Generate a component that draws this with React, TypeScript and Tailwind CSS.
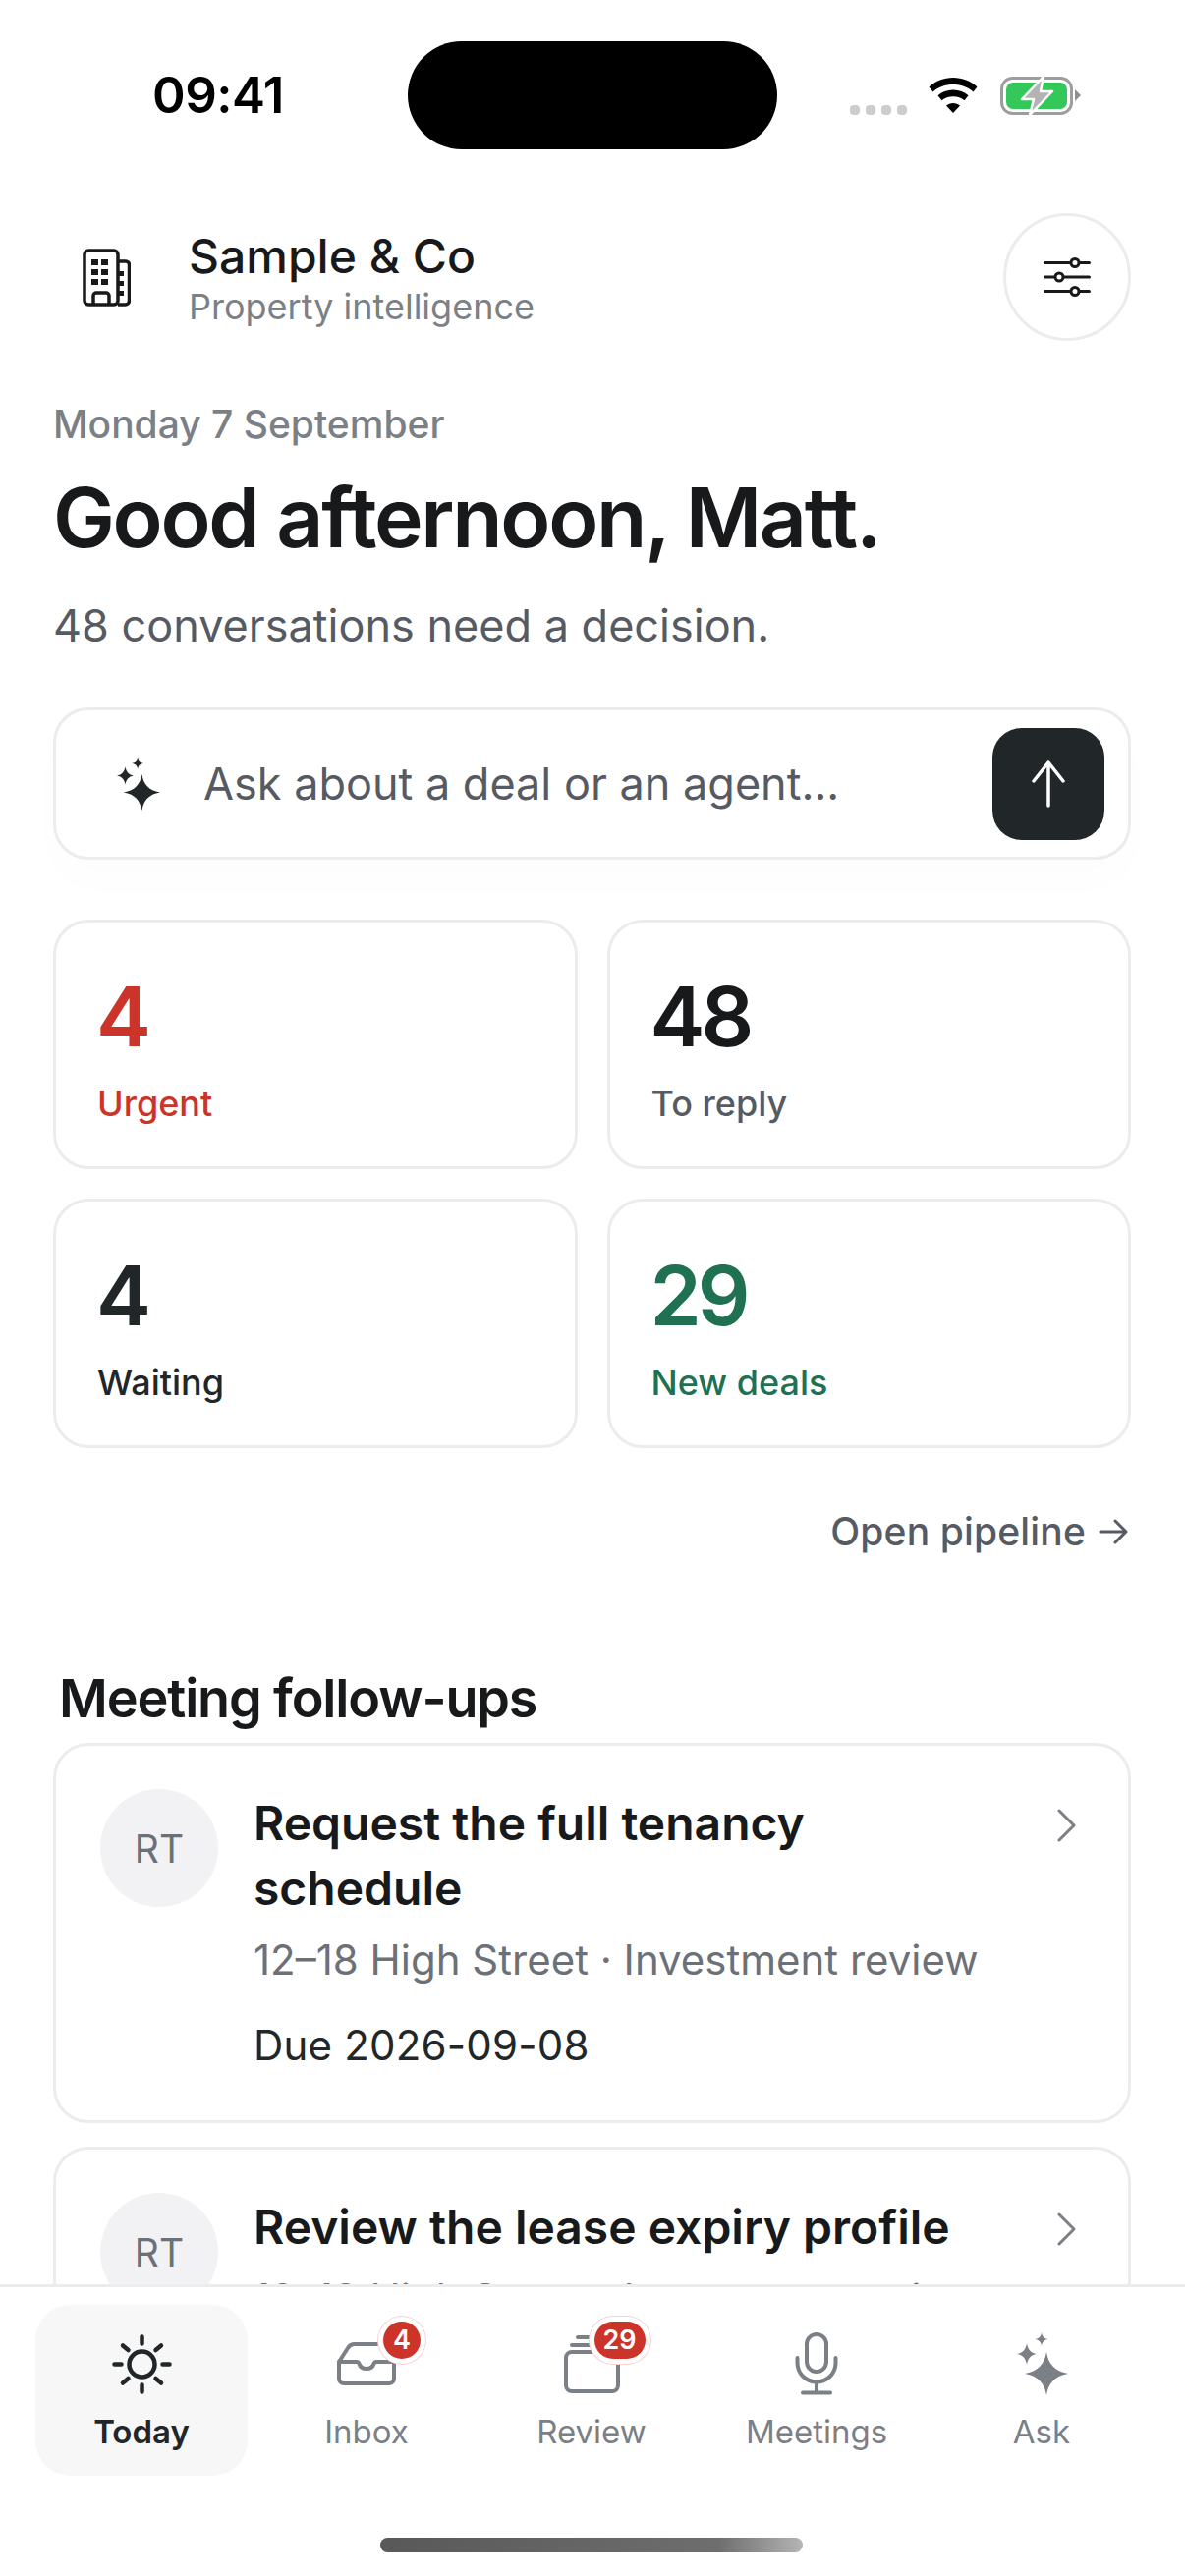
import React from 'react';

const Sparkles = ({ className }: { className?: string }) => (
  <svg viewBox="0 0 52 64" className={className} fill="currentColor">
    <path d="M30 20C32 32 38 39.500 52 42C38 44.500 32 52 30 64C28 52 22 44.500 8 42C22 39.500 28 32 30 20z" />
    <path d="M10 11C11 17.500 14 20.800 20 22C14 23.200 11 26.500 10 33C9 26.500 6 23.200 0 22C6 20.800 9 17.500 10 11z" />
    <path d="M25 0C25.600 4 27.200 6.300 32 7C27.200 7.700 25.600 10 25 14C24.400 10 22.800 7.700 18 7C22.800 6.300 24.400 4 25 0z" />
  </svg>
);

const Building = ({ className }: { className?: string }) => (
  <svg viewBox="0 0 49 59" className={className} fill="none" stroke="currentColor" strokeWidth="3.500">
    <rect x="2" y="2" width="34" height="55" rx="4" />
    <path d="M36 13h8a3.500 3.500 0 0 1 3.500 3.500V53a4 4 0 0 1-4 4H36" />
    <path d="M11 57V48a3 3 0 0 1 3-3h10a3 3 0 0 1 3 3v9" />
    <g fill="currentColor" stroke="none">
      <rect x="9" y="11" width="7" height="6" />
      <rect x="19" y="11" width="7" height="6" />
      <rect x="9" y="21" width="7" height="6" />
      <rect x="19" y="21" width="7" height="6" />
      <rect x="9" y="31" width="7" height="6" />
      <rect x="19" y="31" width="7" height="6" />
      <rect x="36" y="23" width="6" height="5" />
      <rect x="36" y="33" width="6" height="5" />
      <rect x="36" y="43" width="6" height="5" />
    </g>
  </svg>
);

const Sliders = ({ className }: { className?: string }) => (
  <svg viewBox="0 0 48 40" className={className} fill="none" stroke="currentColor" strokeWidth="3" strokeLinecap="round">
    <path d="M1.500 5.500h25M37.500 5.500h9M1.500 20h9M21.500 20h25M1.500 34.500h25M37.500 34.500h9" />
    <circle cx="32" cy="5.500" r="4" />
    <circle cx="16" cy="20" r="4" />
    <circle cx="32" cy="34.500" r="4" />
  </svg>
);

const Sun = ({ className }: { className?: string }) => (
  <svg viewBox="0 0 61 61" className={className} fill="none" stroke="currentColor" strokeWidth="4.500" strokeLinecap="round">
    <circle cx="30.500" cy="30.500" r="13" />
    <path d="M30.500 2.500v7M30.500 51.500v7M2.500 30.500h7M51.500 30.500h7M11 11.500l5.500 4.500M44.500 45l5.500 4.500M11 49.500l5.500-4.500M44.500 16l5.500-4.500" />
  </svg>
);

const Tray = ({ className }: { className?: string }) => (
  <svg viewBox="0 0 60 44" className={className} fill="none" stroke="currentColor" strokeWidth="4" strokeLinecap="round" strokeLinejoin="round">
    <path d="M2 20L11 6a8 8 0 0 1 6-4h30" />
    <path d="M2 20h18c1.500 0 2 .8 2.500 2 1 3 4 5 7.500 5s6.500-2 7.500-5c.5-1.200 1-2 2.500-2h18v17a5 5 0 0 1-5 5H7a5 5 0 0 1-5-5z" />
  </svg>
);

const Stack = ({ className }: { className?: string }) => (
  <svg viewBox="0 0 57 59" className={className} fill="none" stroke="currentColor" strokeWidth="4" strokeLinecap="round">
    <rect x="2" y="17" width="53" height="40" rx="6" />
    <path d="M14 2h24M8 10h36" />
  </svg>
);

const Mic = ({ className }: { className?: string }) => (
  <svg viewBox="0 0 44 64" className={className} fill="none" stroke="currentColor" strokeWidth="4" strokeLinecap="round">
    <rect x="12" y="2" width="20" height="38" rx="10" />
    <path d="M2.500 26v5a19.500 19.500 0 0 0 39 0v-5M22 51v10M8 61.500h28" />
  </svg>
);

const ArrowUp = ({ className }: { className?: string }) => (
  <svg viewBox="0 0 36 48" className={className} fill="none" stroke="currentColor" strokeWidth="3.500" strokeLinecap="round" strokeLinejoin="round">
    <path d="M18 2v44M3 21L18 2l15 19" />
  </svg>
);

const ArrowRight = ({ className }: { className?: string }) => (
  <svg viewBox="0 0 30 26" className={className} fill="none" stroke="currentColor" strokeWidth="3" strokeLinecap="round" strokeLinejoin="round">
    <path d="M2 13h26M17 2l11 11-11 11" />
  </svg>
);

const Chevron = ({ className }: { className?: string }) => (
  <svg viewBox="0 0 21 34" className={className} fill="none" stroke="currentColor" strokeWidth="3" strokeLinecap="round" strokeLinejoin="round">
    <path d="M3 2l15 15L3 32" />
  </svg>
);

const Wifi = () => (
  <svg viewBox="0 0 50 36" className="w-[50px] h-[36px] text-black" fill="currentColor">
    <path d="M25 0c9.500 0 18 3.400 24.500 9.500l-4 5C40 9.500 33 7 25 7S10 9.500 4.500 14.500l-4-5C7 3.400 15.500 0 25 0z" />
    <path d="M25 12.500c6 0 11.500 2.200 15.500 5.800l-4 5c-3-2.600-7-4-11.500-4s-8.500 1.400-11.500 4l-4-5c4-3.600 9.500-5.800 15.500-5.800z" />
    <path d="M25 26c2.700 0 5 1 7 2.500L25 36l-7-7.500c2-1.500 4.300-2.500 7-2.500z" />
  </svg>
);

const Battery = () => (
  <svg viewBox="0 0 82 39" className="w-[82px] h-[39px]">
    <rect x="1.500" y="1.500" width="71" height="36" rx="11" fill="none" stroke="#9d9d9d" strokeWidth="3" />
    <rect x="6" y="6" width="62" height="27" rx="7" fill="#34c759" />
    <path d="M76 13l6 6-6 6z" fill="#8e8e8e" />
    <path d="M44 0L22 23H34L30 39L53 15H41z" fill="#b3b3b3" stroke="#fff" strokeWidth="2.500" strokeLinejoin="round" />
  </svg>
);

const stats = [
  { value: '4', label: 'Urgent', num: 'text-[#cc3329]', sub: 'text-[#cc3329]' },
  { value: '48', label: 'To reply', num: 'text-[#18191b]', sub: 'text-[#565a62]' },
  { value: '4', label: 'Waiting', num: 'text-[#212629]', sub: 'text-[#212629]' },
  { value: '29', label: 'New deals', num: 'text-[#1f7152]', sub: 'text-[#1f7152]' },
];

const followUps = [
  { title: 'Request the full tenancy schedule', sub: '12–18 High Street · Investment review', due: 'Due 2026-09-08' },
  { title: 'Review the lease expiry profile', sub: '12–18 High Street · Investment review', due: 'Due 2026-09-10' },
];

const tabs = [
  { label: 'Today', icon: <Sun className="w-[61px] h-[61px]" />, active: true },
  { label: 'Inbox', icon: <Tray className="w-[60px] h-[44px]" />, badge: '4', badgePos: 'left-[47px] w-[38px]' },
  { label: 'Review', icon: <Stack className="w-[57px] h-[59px]" />, badge: '29', badgePos: 'left-[31px] w-[52px]' },
  { label: 'Meetings', icon: <Mic className="w-[44px] h-[64px]" /> },
  { label: 'Ask', icon: <Sparkles className="w-[52px] h-[64px] ml-[2px]" /> },
];

export default function App() {
  return (
    <div className="w-[1206px] h-[2622px] bg-white flex flex-col overflow-hidden font-['Inter',sans-serif]">
      <div className="flex-1 min-h-0 overflow-hidden">
        {/* status bar */}
        <div className="h-[200px] pt-[42px] pl-[155px] pr-[106px] flex items-start">
          <span className="w-[260px] h-[110px] flex items-center text-[51px] font-semibold text-black tracking-[-0.5px]">09:41</span>
          <div className="w-[376px] h-[110px] bg-black rounded-[55px]" />
          <div className="flex-1 h-[110px] flex items-center justify-end">
            <div className="flex gap-[6px] mt-[29px] mr-[22px]">
              <span className="w-[10px] h-[10px] rounded-[4px] bg-[#cdcdcd]" />
              <span className="w-[10px] h-[10px] rounded-[4px] bg-[#cdcdcd]" />
              <span className="w-[10px] h-[10px] rounded-[4px] bg-[#cdcdcd]" />
              <span className="w-[10px] h-[10px] rounded-[4px] bg-[#cdcdcd]" />
            </div>
            <Wifi />
            <div className="ml-[23px]">
              <Battery />
            </div>
          </div>
        </div>

        {/* brand row */}
        <div className="h-[130px] mt-[17px] pl-[84px] pr-[55px] flex items-center">
          <Building className="w-[49px] h-[59px] text-[#18191b]" />
          <div className="ml-[59px] flex-1 pt-[2px]">
            <div className="text-[48px] leading-[58px] font-medium text-[#18191b]">Sample &amp; Co</div>
            <div className="text-[36px] leading-[44px] text-[#7b7f86]">Property intelligence</div>
          </div>
          <button className="w-[130px] h-[130px] rounded-full border-[3px] border-[#ececee] flex items-center justify-center text-[#18191b]">
            <Sliders className="w-[48px] h-[40px]" />
          </button>
        </div>

        <div className="pl-[54px] pr-[55px]">
          <div className="mt-[58px] text-[39px] leading-[54px] font-medium text-[#7b7f86]">Monday 7 September</div>
          <h1 className="mt-[18px] text-[84px] leading-[100px] font-semibold tracking-[-2.3px] text-[#18191b]">Good afternoon, Matt.</h1>
          <p className="mt-[29px] text-[45px] leading-[62px] text-[#565a62]">48 conversations need a decision.</p>

          {/* ask box */}
          <div className="mt-[52px] h-[155px] rounded-[36px] border-[3px] border-[#ececee] flex items-center pl-[62px] pr-[24px] shadow-[0_24px_48px_rgba(0,0,0,0.012)]">
            <Sparkles className="w-[44px] h-[54px] text-[#212629]" />
            <span className="ml-[44px] flex-1 text-[45px] text-[#565a62]">Ask about a deal or an agent...</span>
            <button className="w-[114px] h-[114px] rounded-[30px] bg-[#212629] flex items-center justify-center text-white">
              <ArrowUp className="w-[36px] h-[48px]" />
            </button>
          </div>

          {/* stat cards */}
          <div className="mt-[61px] grid grid-cols-2 gap-[30px]">
            {stats.map((s) => (
              <div key={s.label} className="h-[254px] rounded-[36px] border-[3px] border-[#ececee] pl-[42px] pt-[46px]">
                <div className={`-ml-[1px] text-[84px] leading-[100px] font-semibold tracking-[-4px] ${s.num}`}>{s.value}</div>
                <div className={`mt-[16px] text-[36px] leading-[44px] font-medium ${s.sub}`}>{s.label}</div>
              </div>
            ))}
          </div>

          <div className="mt-[61px] flex items-center justify-end gap-[13px] mr-[2px] text-[39px] leading-[48px] font-medium tracking-[0.15px] text-[#565a62]">
            Open pipeline
            <ArrowRight className="w-[30px] h-[26px] mr-[1px]" />
          </div>

          <h2 className="mt-[114px] pl-[6px] text-[54px] leading-[64px] font-semibold tracking-[-1.15px] text-[#18191b]">Meeting follow-ups</h2>

          <div className="mt-[13px] flex flex-col gap-[24px]">
            {followUps.map((f) => (
              <div key={f.title} className="relative rounded-[36px] border-[3px] border-[#ececee] pl-[45px] pr-[130px] pt-[44px] pb-[48px] flex gap-[36px]">
                <div className="w-[120px] h-[120px] shrink-0 rounded-full bg-[#f2f2f4] flex items-center justify-center pt-[2px] text-[39px] text-[#6c7077]">RT</div>
                <div className="flex-1 min-w-0 pt-[2px]">
                  <div className="text-[48px] leading-[66px] font-semibold text-[#18191b]">{f.title}</div>
                  <div className="mt-[10px] text-[42px] leading-[60px] text-[#6c7077]">{f.sub}</div>
                  <div className="mt-[29px] text-[42px] leading-[56px] tracking-[0.2px] text-[#212629]">{f.due}</div>
                </div>
                <Chevron className="absolute right-[52px] top-[64px] w-[21px] h-[34px] text-[#7b7f86]" />
              </div>
            ))}
          </div>
        </div>
      </div>

      {/* bottom tab bar */}
      <nav className="relative h-[297px] shrink-0 bg-white border-t-[3px] border-[#ececee]">
        <div className="pt-[18px] pl-[36px] pr-[38px] grid grid-cols-5 gap-[13px]">
          {tabs.map((t) => (
            <div key={t.label} className={`h-[174px] rounded-[36px] flex flex-col items-center ${t.active ? 'bg-[#f7f7f8]' : ''}`}>
              <div className={`relative h-[92px] mt-[14px] flex items-center justify-center ${t.active ? 'text-[#212629]' : 'text-[#7b7f86]'}`}>
                {t.icon}
                {t.badge && (
                  <span className={`absolute top-[3px] h-[38px] rounded-full bg-[#cc3329] shadow-[0_0_0_5px_#fff,0_0_0_6px_#f5d3d0] text-white text-[27px] leading-[38px] font-semibold text-center ${t.badgePos}`}>
                    {t.badge}
                  </span>
                )}
              </div>
              <span className={`mt-[1px] text-[33px] leading-[44px] ${t.active ? 'font-semibold text-[#212629]' : 'text-[#7b7f86]'}`}>{t.label}</span>
            </div>
          ))}
        </div>
        <div className="absolute left-[387px] top-[255px] w-[430px] h-[15px] rounded-full bg-gradient-to-r from-[#585858] via-[#6e6e6e] via-80% to-[#b5b5b5]" />
      </nav>
    </div>
  );
}
